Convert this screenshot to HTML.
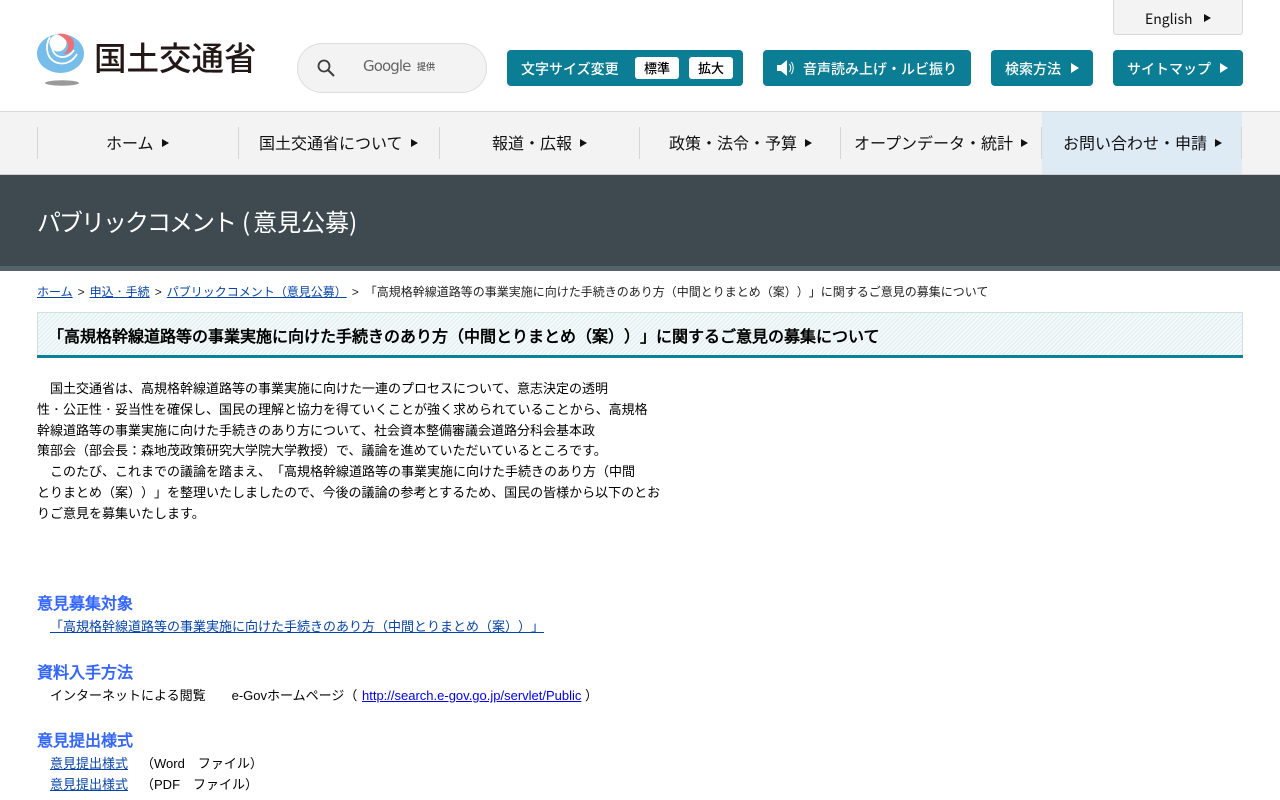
<!DOCTYPE html>
<html lang="ja"><head><meta charset="utf-8"><title>パブリックコメント</title>
<style>
html,body{margin:0;padding:0;background:#fff;}
body{width:1280px;height:800px;overflow:hidden;position:relative;font-family:"Liberation Sans","WenQuanYi Zen Hei",sans-serif;color:#000;text-spacing-trim:space-all;font-feature-settings:"chws" 0;}
.a{position:absolute;white-space:nowrap;}
.btn{position:absolute;top:50px;height:36px;background:#0b7d95;border-radius:4px;color:#fff;font-size:14px;line-height:38px;font-weight:500;font-family:"Noto Sans CJK JP",sans-serif;white-space:nowrap;}
.btn span{position:absolute;top:0;}
.tri{position:absolute;width:0;height:0;border-style:solid;border-color:transparent;}
.chip{position:absolute;top:7px;height:22px;width:44px;background:#fff;border-radius:3px;color:#000;text-align:center;line-height:22px;font-size:13px;}
.nav{position:absolute;top:112px;left:0;width:1280px;height:62px;background:#f3f3f3;}
.sep{position:absolute;top:127px;width:1px;height:32px;background:#d5d5d5;}
.ni{position:absolute;top:126px;line-height:32px;font-size:16px;font-family:"Noto Sans CJK JP",sans-serif;white-space:nowrap;color:#111;}
.t{font-size:13px;line-height:21px;}
a{color:#0645ad;}
.h{position:absolute;left:37px;font-size:16px;font-weight:bold;color:#3366ff;line-height:22px;white-space:nowrap;}
.g{margin:0 5px 0 5px;}
.d{font-family:"IPAGothic",sans-serif;}
</style></head><body>

<svg class="a" style="left:36px;top:33px" width="50" height="54" viewBox="0 0 50 54">
<ellipse cx="24.500" cy="20.500" rx="23.500" ry="19.500" fill="#76bde9"/>
<circle cx="22" cy="10" r="8.500" fill="#fff"/>
<path d="M14 4 C8 14 11 27 22 30 C30 32 37 28 41 21" fill="none" stroke="#fff" stroke-width="1.800"/>
<path d="M17 8 C14 16 18 23 25 24 C30 24.500 35 22 38 17" fill="none" stroke="#fff" stroke-width="1.800"/>
<path d="M21 1 C32 -1 39 6 38 13 C37 18 33 21 28 21 C32 17 33 13 31 9 C29 5 25 3 21 1Z" fill="#ef6f76"/>
<ellipse cx="26" cy="50" rx="17" ry="2.700" fill="#9a9a9a"/>
</svg>
<div class="a" style="left:94px;top:34px;font-size:32.500px;line-height:46px;font-family:'Noto Sans CJK JP',sans-serif;font-weight:500;color:#231815;">国土交通省</div>

<div class="a" style="left:297px;top:43px;width:188px;height:48px;background:#f3f3f3;border:1px solid #ddd;border-radius:25px;"></div>
<svg class="a" style="left:316px;top:58px" width="20" height="20" viewBox="0 0 20 20"><circle cx="8" cy="8" r="5.500" fill="none" stroke="#3c3c3c" stroke-width="1.800"/><path d="M12 12 L18 18" stroke="#3c3c3c" stroke-width="2"/></svg>
<div class="a" style="left:363px;top:56px;font-size:15px;line-height:20px;color:#666;font-family:'DejaVu Sans',sans-serif;letter-spacing:-.9px;">Google</div>
<div class="a" style="left:417px;top:60px;font-size:9px;line-height:14px;color:#555;font-family:'Noto Sans CJK JP',sans-serif;font-weight:500">提供</div>

<div class="a" style="left:1113px;top:-4px;width:128px;height:37px;background:#f3f3f3;border:1px solid #d8d8d8;border-radius:3px;"></div>
<div class="a" style="left:1145px;top:9px;font-size:14px;line-height:20px;font-family:'Noto Sans CJK JP',sans-serif;color:#111;">English</div>
<div class="tri" style="left:1204px;top:14px;border-width:4.500px 0 4.500px 7px;border-left-color:#111"></div>

<div class="btn" style="left:507px;width:236px;"><span style="left:14px;">文字サイズ変更</span><div class="chip" style="left:128px;">標準</div><div class="chip" style="left:182px;">拡大</div></div>
<div class="btn" style="left:763px;width:208px;">
<svg style="position:absolute;left:13px;top:9px" width="20" height="18" viewBox="0 0 20 18"><path d="M1 6 H5 L11 1 V17 L5 12 H1Z" fill="#fff"/><path d="M13.500 5 Q16 9 13.500 13 M15.500 3 Q19 9 15.500 15" fill="none" stroke="#fff" stroke-width="1"/></svg>
<span style="left:40px;">音声読み上げ・ルビ振り</span></div>
<div class="btn" style="left:991px;width:102px;"><span style="left:14px;">検索方法</span><div class="tri" style="left:80px;top:13px;border-width:5px 0 5px 8px;border-left-color:#fff"></div></div>
<div class="btn" style="left:1113px;width:130px;"><span style="left:14px;">サイトマップ</span><div class="tri" style="left:107px;top:13px;border-width:5px 0 5px 8px;border-left-color:#fff"></div></div>

<div class="a" style="left:0;top:111px;width:1280px;height:1px;background:#d9d9d9"></div>
<div class="nav"></div>
<div class="a" style="left:1042px;top:112px;width:200px;height:62px;background:#deebf5"></div>
<div class="a" style="left:0;top:174px;width:1280px;height:1px;background:#cfcfcf"></div>
<div class="sep" style="left:37px"></div><div class="sep" style="left:238px"></div><div class="sep" style="left:439px"></div><div class="sep" style="left:639px"></div><div class="sep" style="left:840px"></div><div class="sep" style="left:1041px"></div><div class="sep" style="left:1241px"></div>

<div class="ni" style="left:106px">ホーム</div><div class="tri" style="left:162px;top:139px;border-width:4px 0 4px 7px;border-left-color:#111"></div>
<div class="ni" style="left:259px">国土交通省について</div><div class="tri" style="left:411px;top:139px;border-width:4px 0 4px 7px;border-left-color:#111"></div>
<div class="ni" style="left:492px">報道・広報</div><div class="tri" style="left:580px;top:139px;border-width:4px 0 4px 7px;border-left-color:#111"></div>
<div class="ni" style="left:669px">政策・法令・予算</div><div class="tri" style="left:805px;top:139px;border-width:4px 0 4px 7px;border-left-color:#111"></div>
<div class="ni" style="left:854px">オープンデータ・統計</div><div class="tri" style="left:1021px;top:139px;border-width:4px 0 4px 7px;border-left-color:#111"></div>
<div class="ni" style="left:1063px">お問い合わせ・申請</div><div class="tri" style="left:1215px;top:139px;border-width:4px 0 4px 7px;border-left-color:#111"></div>

<div class="a" style="left:0;top:175px;width:1280px;height:96px;background:#3e4a50"></div>
<div class="a" style="left:0;top:266px;width:1280px;height:5px;background:#54636a"></div>
<div class="a" style="left:37px;top:203px;font-size:24px;line-height:36px;color:#fff;font-family:'Noto Sans CJK JP',sans-serif;"><span style="letter-spacing:-2px">パブリックコメント</span><span style="margin:0 3px 0 7px">(</span>意見公募<span>)</span></div>

<div class="a" style="left:37px;top:283px;font-size:12px;line-height:18px;color:#222"><a href="#">ホーム</a><span class="g">&gt;</span><a href="#">申込<span class="d">・</span>手続</a><span class="g">&gt;</span><a href="#">パブリックコメント（意見公募）</a><span class="g">&gt;</span><span style="margin-left:1px">「高規格幹線道路等の事業実施に向けた手続きのあり方（中間とりまとめ（案））」に関するご意見の募集について</span></div>

<div class="a" style="left:37px;top:312px;width:1204px;height:42px;border:1px solid #cfe0e4;border-bottom:none;background:repeating-linear-gradient(135deg,#e3f0f2 0,#e3f0f2 1.500px,#f8fbfc 1.500px,#f8fbfc 3px);"></div>
<div class="a" style="left:37px;top:355px;width:1206px;height:3px;background:#0b8299"></div>
<div class="a" style="left:48px;top:327px;font-size:16px;line-height:22px;font-weight:bold;color:#000;">「高規格幹線道路等の事業実施に向けた手続きのあり方（中間とりまとめ（案））」に関するご意見の募集について</div>

<div class="a t" style="left:37px;top:379px;line-height:20.800px">　国土交通省は、高規格幹線道路等の事業実施に向けた一連のプロセスについて、意志決定の透明<br>性<span class="d">・</span>公正性<span class="d">・</span>妥当性を確保し、国民の理解と協力を得ていくことが強く求められていることから、高規格<br>幹線道路等の事業実施に向けた手続きのあり方について、社会資本整備審議会道路分科会基本政<br>策部会（部会長：森地茂政策研究大学院大学教授）で、議論を進めていただいているところです。<br>　このたび、これまでの議論を踏まえ、「高規格幹線道路等の事業実施に向けた手続きのあり方（中間<br>とりまとめ（案））」を整理いたしましたので、今後の議論の参考とするため、国民の皆様から以下のとお<br>りご意見を募集いたします。</div>

<div class="h" style="top:594px">意見募集対象</div>
<div class="a t" style="left:50px;top:616px"><a href="#">「高規格幹線道路等の事業実施に向けた手続きのあり方（中間とりまとめ（案））」</a></div>
<div class="h" style="top:663px">資料入手方法</div>
<div class="a t" style="left:50px;top:685px">インターネットによる閲覧　　e-Govホームページ（ <a href="#" style="color:#00e;margin-left:1px">http://search.e-gov.go.jp/servlet/Public</a> ）</div>
<div class="h" style="top:731px">意見提出様式</div>
<div class="a t" style="left:50px;top:753px"><a href="#">意見提出様式</a>　（Word　ファイル）</div>
<div class="a t" style="left:50px;top:774px"><a href="#">意見提出様式</a>　（PDF　ファイル）</div>
</body></html>
